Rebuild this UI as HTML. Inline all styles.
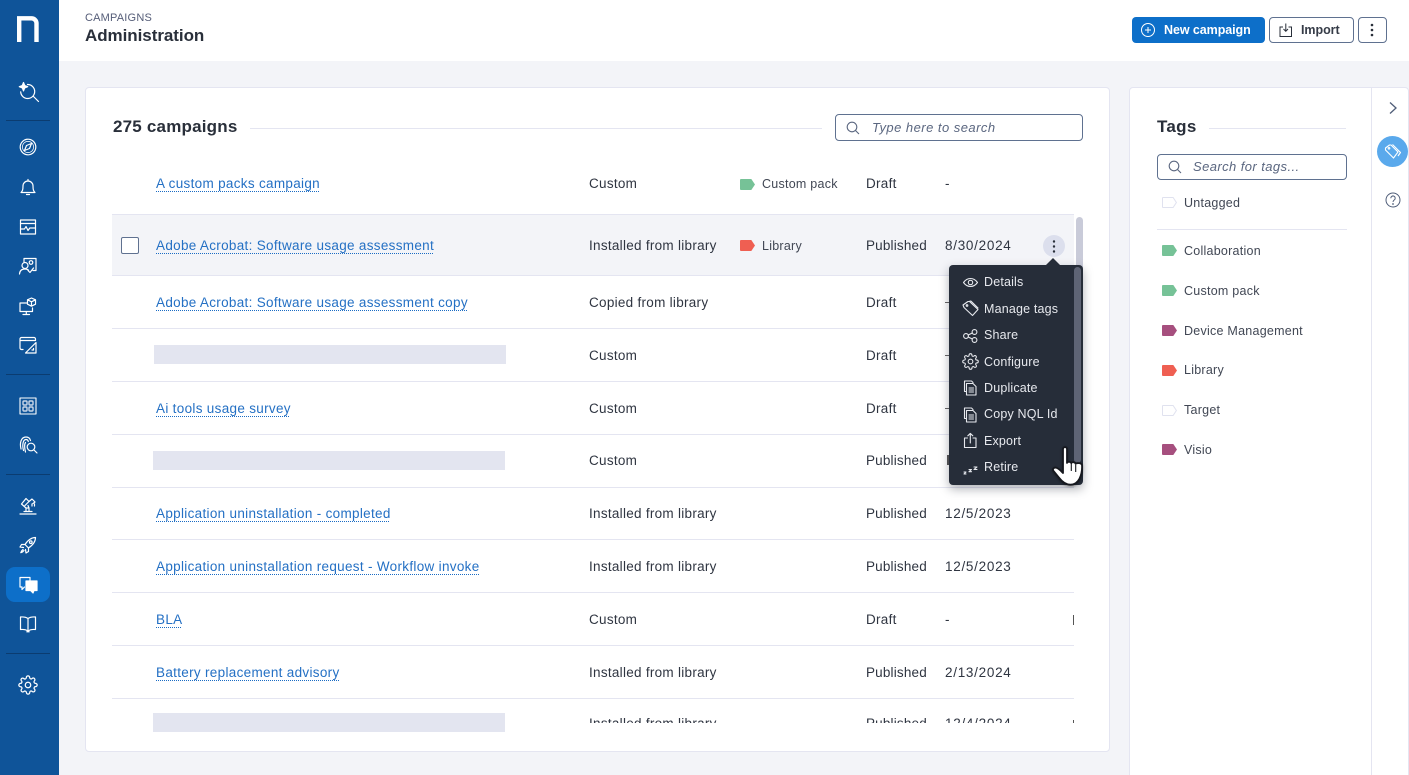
<!DOCTYPE html>
<html lang="en"><head><meta charset="utf-8"><title>Campaigns Administration</title>
<style>
*{box-sizing:border-box}
html,body{margin:0;padding:0;width:1409px;height:775px;overflow:hidden;background:#f3f4f8;font-family:"Liberation Sans",sans-serif;color:#292f3a}
#root{position:relative;width:1409px;height:775px;overflow:hidden}
.a{position:absolute}
.t{position:absolute;white-space:nowrap;font-size:13.5px;line-height:20px;height:20px;margin-top:1px;letter-spacing:.28px;color:#2f3541}
.p{letter-spacing:.18px}
.d{letter-spacing:.72px}
a.t{color:#2470c4;letter-spacing:.31px;text-decoration:underline dotted #1a6cc4 1px;text-underline-offset:3px}
.g{font-size:12.5px;letter-spacing:.25px;color:#414754}
.ln{position:absolute;left:112px;width:962px;height:1px;background:#e4e5f1}
.mask{position:absolute;height:19px;background:#e3e5f0}
.ic{position:absolute;left:18px;width:20px;height:20px;fill:none;stroke:#fff;stroke-width:1.2;stroke-linecap:round;stroke-linejoin:round}
.sl{position:absolute;left:6px;width:44px;height:1px;background:#0b3c70}
.m{position:absolute;left:984px;color:#e7e9ee;font-size:12.5px;line-height:18px;white-space:nowrap;letter-spacing:.17px}
.mi{position:absolute;left:962px;width:17px;height:17px;fill:none;stroke:#e7e9ee;stroke-width:1.1;stroke-linecap:round;stroke-linejoin:round}
.tag{position:absolute;width:15px;height:11px}
</style></head><body>
<div id="root">

<div class="a" style="left:0;top:0;width:59px;height:775px;background:#0f5499"></div>
<div class="a" style="left:59px;top:0;width:1350px;height:61px;background:#fff"></div>

<svg class="a" style="left:17px;top:16px" width="22" height="26" viewBox="0 0 22 26"><path d="M2.200 26V2.300H14.500a5 5 0 0 1 5 5V26" fill="none" stroke="#fff" stroke-width="4.400"/></svg>

<svg class="ic" style="top:81px;left:18px;width:22px;height:22px" viewBox="0 0 22 22"><path d="M9.500 3.500a7 7 0 1 1-6.800 7.300M15 15l5.500 5.500"/><path d="M5.500 1.500l1.200 3 3 1.200-3 1.200-1.200 3-1.200-3-3-1.200 3-1.200z" fill="#fff"/></svg>
<div class="sl" style="top:120px"></div>
<svg class="ic" style="top:137px" viewBox="0 0 20 20"><circle cx="10" cy="10" r="7.800" stroke-dasharray="3 .6"/><circle cx="10" cy="10" r="5.600" stroke-width=".7"/><path d="M13.500 6.500l-2 5-5 2 2-5z"/></svg>
<svg class="ic" style="top:177px" viewBox="0 0 20 20"><path d="M3 15.500h14c-1.500-1.500-2-2.500-2-6.500a5 5 0 0 0-10 0c0 4-.5 5-2 6.500zM8.500 17.500h3M10 2.500v1.500"/></svg>
<svg class="ic" style="top:217px" viewBox="0 0 20 20"><rect x="2.500" y="3" width="15" height="14"/><path d="M2.500 6.500h15M2.500 12h4l1.500-2.500 2 4 1.800-2.500h5.700"/></svg>
<svg class="ic" style="top:256px" viewBox="0 0 20 20"><path d="M6 6V2.500h12v12h-3M10 14.500l2 2 3.500-4.500"/><circle cx="7" cy="9.500" r="3"/><path d="M1.500 18c.3-3.500 2.300-5 5.500-5 1.500 0 2.800.4 3.600 1.300"/><circle cx="13" cy="6.500" r="1.800"/></svg>
<svg class="ic" style="top:296px" viewBox="0 0 20 20"><path d="M9.500 7H2v8.500h12.500V12M8.300 15.500v2.500M5 18.500h6.500"/><path d="M13.500 2l4 1.800v4.400l-4 2-4-2V3.800zM9.500 3.800l4 2 4-2M13.500 5.800v4.400"/></svg>
<svg class="ic" style="top:335px" viewBox="0 0 20 20"><path d="M5 14.500H3.500a1.500 1.500 0 0 1-1.500-1.500V4a1.500 1.500 0 0 1 1.500-1.500h12.500A1.500 1.500 0 0 1 17.500 4v1.500H2"/><path d="M18 7.500v10.500H7.500zM14 15h1.500v-1.500"/></svg>
<div class="sl" style="top:374px"></div>
<svg class="ic" style="top:396px" viewBox="0 0 20 20"><rect x="2" y="2" width="16" height="16" stroke-width="1.100"/><rect x="5" y="5" width="4" height="4" rx="1" stroke-width="1.400" stroke="#c9d6e8"/><rect x="11" y="5" width="4" height="4" rx="1" stroke-width="1.400" stroke="#c9d6e8"/><rect x="5" y="11" width="4" height="4" rx="1" stroke-width="1.400" stroke="#c9d6e8"/><rect x="11" y="11" width="4" height="4" rx="1" stroke-width="1.400" stroke="#c9d6e8"/></svg>
<svg class="ic" style="top:435px" viewBox="0 0 20 20"><path d="M3 14C1.500 8 3 2 8 2c2.500 0 4 1.500 4.500 3.500M5.500 15.500C4 10 5 4.500 8 4.500c1.300 0 2 .7 2.300 2M7.500 17C6.500 13 6.500 9 7.500 7.500"/><circle cx="13" cy="12" r="3.800"/><path d="M16 15l3 3"/></svg>
<div class="sl" style="top:474px"></div>
<svg class="ic" style="top:496px" viewBox="0 0 20 20"><path d="M2 18h16M6 15.500h8M8 15.500v-3.500L3.500 8 8 2.500l3 3L7 9.500M11 12v3.500M8 12h3l-1-2.500M11 5.500L14 3l3 3-2 1.500M16.500 8v2M14 8v2"/></svg>
<svg class="ic" style="top:535px" viewBox="0 0 20 20"><path d="M17.500 2.500c-4.500 0-7.500 2.500-10.500 7l3.500 3.500c4.500-3 7-6 7-10.500zM7 9.500H3.500L2 12l3.500.5M10.500 13v3.500L8 18l-.5-3.500M5 14.500c-1 .7-1.800 2-2.200 3.200 1.200-.4 2.500-1.200 3.200-2.200"/><circle cx="12.800" cy="7.200" r="1.300"/></svg>
<div class="a" style="left:6px;top:567px;width:44px;height:35px;border-radius:9px;background:#0d6fc9"></div>
<svg class="ic" style="top:575px" viewBox="0 0 20 20"><path d="M12 5.500V2.500H2v9.500h2v2.500l2.500-2.500"/><path d="M8 6h11v9.500h-3l-1 2.500-2.500-2.500H8z" fill="#fff" stroke="#fff"/></svg>
<svg class="ic" style="top:614px" viewBox="0 0 20 20"><path d="M10 4.500C8 3 5 2.800 2.500 3v12.500c2.500-.2 5.500 0 7.500 1.500 2-1.500 5-1.700 7.500-1.500V3C15 2.800 12 3 10 4.500zM10 4.500V17M8.800 17.800h2.400"/></svg>
<div class="sl" style="top:653px"></div>
<svg class="ic" style="top:675px;stroke-width:1.500" viewBox="0 0 24 24"><circle cx="12" cy="12" r="3.300"/><path d="M19.400 15a1.650 1.650 0 0 0 .33 1.820l.06.06a2 2 0 0 1 0 2.830 2 2 0 0 1-2.830 0l-.06-.06a1.650 1.650 0 0 0-1.820-.33 1.650 1.650 0 0 0-1 1.510V21a2 2 0 0 1-2 2 2 2 0 0 1-2-2v-.09A1.650 1.650 0 0 0 9 19.400a1.650 1.650 0 0 0-1.820.33l-.06.06a2 2 0 0 1-2.830 0 2 2 0 0 1 0-2.830l.06-.06a1.650 1.650 0 0 0 .33-1.820 1.650 1.650 0 0 0-1.510-1H3a2 2 0 0 1-2-2 2 2 0 0 1 2-2h.09A1.650 1.650 0 0 0 4.600 9a1.650 1.650 0 0 0-.33-1.820l-.06-.06a2 2 0 0 1 0-2.830 2 2 0 0 1 2.830 0l.06.06a1.650 1.650 0 0 0 1.820.33H9a1.650 1.650 0 0 0 1-1.510V3a2 2 0 0 1 2-2 2 2 0 0 1 2 2v.09a1.650 1.650 0 0 0 1 1.510 1.650 1.650 0 0 0 1.820-.33l.06-.06a2 2 0 0 1 2.830 0 2 2 0 0 1 0 2.830l-.06.06a1.650 1.650 0 0 0-.33 1.820V9a1.650 1.650 0 0 0 1.510 1H21a2 2 0 0 1 2 2 2 2 0 0 1-2 2h-.09a1.650 1.650 0 0 0-1.510 1z"/></svg>

<!-- header -->
<div class="t" style="left:85px;top:7px;font-size:11px;color:#555d78;letter-spacing:.2px">CAMPAIGNS</div>
<div class="t" style="left:85px;top:25px;font-size:17px;font-weight:700;color:#292f3a;letter-spacing:-.05px">Administration</div>

<div class="a" style="left:1132px;top:17px;width:133px;height:26px;border-radius:4px;background:#0d6fc9"></div>
<svg class="a" style="left:1140px;top:22px" width="16" height="16" viewBox="0 0 16 16" fill="none" stroke="#fff" stroke-width="1"><circle cx="8" cy="8" r="6.500"/><path d="M8 5v6M5 8h6"/></svg>
<div class="t" style="left:1164px;top:19px;color:#fff;font-weight:700;font-size:12.5px;letter-spacing:-.07px">New campaign</div>
<div class="a" style="left:1269px;top:17px;width:85px;height:26px;border-radius:4px;background:#fff;border:1px solid #5f7190"></div>
<svg class="a" style="left:1278px;top:22px" width="16" height="16" viewBox="0 0 16 16" fill="none" stroke="#292f3a" stroke-width="1"><path d="M5 5H2v9.500h11.500V5h-3M7.800 1.500V9M5.500 7l2.300 2.300L10 7"/></svg>
<div class="t" style="left:1301px;top:19px;font-weight:700;font-size:12.500px;letter-spacing:-.05px;color:#363c48">Import</div>
<div class="a" style="left:1358px;top:17px;width:29px;height:26px;border-radius:4px;background:#fff;border:1px solid #5f7190"></div>
<svg class="a" style="left:1370px;top:22px" width="4" height="16"><circle cx="2" cy="3" r="1.300" fill="#292f3a"/><circle cx="2" cy="8" r="1.300" fill="#292f3a"/><circle cx="2" cy="13" r="1.300" fill="#292f3a"/></svg>

<!-- main card -->
<div class="a" style="left:85px;top:87px;width:1025px;height:665px;background:#fff;border:1px solid #e4e5f1;border-radius:4px"></div>
<div class="t" style="left:113px;top:116px;font-size:17px;font-weight:700;color:#292f3a;letter-spacing:.2px">275 campaigns</div>
<div class="a" style="left:250px;top:128px;width:572px;height:1px;background:#e4e5f1"></div>
<div class="a" style="left:835px;top:114px;width:248px;height:27px;border:1px solid #5f7190;border-radius:4px;background:#fff"></div>
<svg class="a" style="left:846px;top:121px" width="14" height="14" viewBox="0 0 14 14" fill="none" stroke="#5b6780" stroke-width="1.100"><circle cx="6" cy="6" r="4.800"/><path d="M9.500 9.500l3.500 3.500"/></svg>
<div class="t" style="left:872px;top:117px;font-style:italic;color:#5b6780;font-size:13px;letter-spacing:.47px">Type here to search</div>

<!-- rows -->
<div class="a" style="left:112px;top:214px;width:962px;height:62px;background:#f3f4f8"></div>
<div class="ln" style="top:214px"></div><div class="ln" style="top:275px"></div><div class="ln" style="top:328px"></div><div class="ln" style="top:381px"></div><div class="ln" style="top:434px"></div><div class="ln" style="top:487px"></div><div class="ln" style="top:539px"></div><div class="ln" style="top:592px"></div><div class="ln" style="top:645px"></div><div class="ln" style="top:698px"></div>

<div class="a" style="left:121px;top:237px;width:18px;height:17px;border:1px solid #5f7190;border-radius:2px;background:#fff"></div>

<a class="t" style="left:156px;top:173px">A custom packs campaign</a>
<a class="t" style="left:156px;top:235px">Adobe Acrobat: Software usage assessment</a>
<a class="t" style="left:156px;top:292px">Adobe Acrobat: Software usage assessment copy</a>
<div class="mask" style="left:154px;top:345px;width:352px"></div>
<a class="t" style="left:156px;top:398px">Ai tools usage survey</a>
<div class="mask" style="left:153px;top:451px;width:352px"></div>
<a class="t" style="left:156px;top:503px">Application uninstallation - completed</a>
<a class="t" style="left:156px;top:556px">Application uninstallation request - Workflow invoke</a>
<a class="t" style="left:156px;top:609px">BLA</a>
<a class="t" style="left:156px;top:662px">Battery replacement advisory</a>
<div class="mask" style="left:153px;top:713px;width:352px"></div>

<div class="t" style="left:589px;top:173px">Custom</div>
<div class="t" style="left:589px;top:235px">Installed from library</div>
<div class="t" style="left:589px;top:292px">Copied from library</div>
<div class="t" style="left:589px;top:345px">Custom</div>
<div class="t" style="left:589px;top:398px">Custom</div>
<div class="t" style="left:589px;top:450px">Custom</div>
<div class="t" style="left:589px;top:503px">Installed from library</div>
<div class="t" style="left:589px;top:556px">Installed from library</div>
<div class="t" style="left:589px;top:609px">Custom</div>
<div class="t" style="left:589px;top:662px">Installed from library</div>

<svg class="tag" style="left:740px;top:179px" viewBox="0 0 15 11"><path d="M1 0h10.300L15 5.500 11.300 11H1a1 1 0 0 1-1-1V1a1 1 0 0 1 1-1z" fill="#76c297"/></svg>
<div class="t g" style="left:762px;top:173px">Custom pack</div>
<svg class="tag" style="left:740px;top:240px" viewBox="0 0 15 11"><path d="M1 0h10.300L15 5.500 11.300 11H1a1 1 0 0 1-1-1V1a1 1 0 0 1 1-1z" fill="#ef5f52"/></svg>
<div class="t g" style="left:762px;top:235px">Library</div>

<div class="t" style="left:866px;top:173px">Draft</div>
<div class="t p" style="left:866px;top:235px">Published</div>
<div class="t" style="left:866px;top:292px">Draft</div>
<div class="t" style="left:866px;top:345px">Draft</div>
<div class="t" style="left:866px;top:398px">Draft</div>
<div class="t p" style="left:866px;top:450px">Published</div>
<div class="t p" style="left:866px;top:503px">Published</div>
<div class="t p" style="left:866px;top:556px">Published</div>
<div class="t" style="left:866px;top:609px">Draft</div>
<div class="t p" style="left:866px;top:662px">Published</div>

<div class="t" style="left:945px;top:173px">-</div>
<div class="t d" style="left:945px;top:235px">8/30/2024</div>
<div class="t d" style="left:945px;top:503px">12/5/2023</div>
<div class="t d" style="left:945px;top:556px">12/5/2023</div>
<div class="t" style="left:945px;top:609px">-</div>
<div class="t d" style="left:945px;top:662px">2/13/2024</div>
<div class="a" style="left:945px;top:302px;width:5px;height:1px;background:#666"></div>
<div class="a" style="left:945px;top:355px;width:5px;height:1px;background:#666"></div>
<div class="a" style="left:945px;top:408px;width:5px;height:1px;background:#666"></div>
<div class="a" style="left:947px;top:455px;width:2px;height:10px;background:#555"></div>
<div class="a" style="left:1073px;top:615px;width:1px;height:10px;background:#555"></div>

<!-- clipped last row -->
<div class="a" style="left:112px;top:712px;width:962px;height:11px;overflow:hidden">
  <div class="t" style="left:477px;top:1px">Installed from library</div>
  <div class="t p" style="left:754px;top:1px">Published</div>
  <div class="t d" style="left:833px;top:1px">12/4/2024</div>
  <div class="a" style="left:961px;top:8px;width:1px;height:3px;background:#555"></div>
</div>

<!-- scrollbar -->
<div class="a" style="left:1076px;top:217px;width:7px;height:240px;border-radius:4px;background:#c9cbd9"></div>

<!-- kebab -->
<div class="a" style="left:1043px;top:235px;width:22px;height:22px;border-radius:50%;background:#dcdfed"></div>
<svg class="a" style="left:1052px;top:239px" width="4" height="15"><circle cx="2" cy="2.500" r="1.200" fill="#292f3a"/><circle cx="2" cy="7.500" r="1.200" fill="#292f3a"/><circle cx="2" cy="12.500" r="1.200" fill="#292f3a"/></svg>

<!-- menu -->
<div class="a" style="left:949px;top:265px;width:134px;height:220px;border-radius:4px;background:#262d39;box-shadow:0 4px 10px rgba(30,35,50,.35)"></div>
<svg class="a" style="left:1045px;top:258px" width="16" height="8"><path d="M0 8L8 0l8 8z" fill="#262d39"/></svg>
<div class="a" style="left:1074px;top:267px;width:7px;height:196px;border-radius:4px;background:#5e6475"></div>

<svg class="mi" style="top:274px" viewBox="0 0 17 17"><path d="M1.500 8.500C3.500 5.700 6 4.500 8.500 4.500s5 1.200 7 4c-2 2.800-4.500 4-7 4s-5-1.200-7-4z"/><circle cx="8.500" cy="8.500" r="2.200"/></svg>
<div class="m" style="top:273px">Details</div>
<svg class="mi" style="top:300px" viewBox="0 0 17 17"><path d="M1 5l5-3.500h1.500l8.500 8-5.500 6-8.500-8z"/><path d="M8 1l1 .2 7 6.800"/><circle cx="5" cy="5.500" r=".8"/></svg>
<div class="m" style="top:300px">Manage tags</div>
<svg class="mi" style="top:327px" viewBox="0 0 17 17"><circle cx="4" cy="9" r="2.400"/><circle cx="12.500" cy="5" r="2.400"/><circle cx="12.500" cy="13" r="2.400"/><path d="M6.200 8l4.100-2M6.200 10l4.100 2"/></svg>
<div class="m" style="top:326px">Share</div>
<svg class="mi" style="top:353px;stroke-width:1.500" viewBox="0 0 24 24"><circle cx="12" cy="12" r="3.300"/><path d="M19.400 15a1.650 1.650 0 0 0 .33 1.820l.06.06a2 2 0 0 1 0 2.830 2 2 0 0 1-2.830 0l-.06-.06a1.650 1.650 0 0 0-1.820-.33 1.650 1.650 0 0 0-1 1.510V21a2 2 0 0 1-2 2 2 2 0 0 1-2-2v-.09A1.650 1.650 0 0 0 9 19.400a1.650 1.650 0 0 0-1.820.33l-.06.06a2 2 0 0 1-2.830 0 2 2 0 0 1 0-2.830l.06-.06a1.650 1.650 0 0 0 .33-1.820 1.650 1.650 0 0 0-1.510-1H3a2 2 0 0 1-2-2 2 2 0 0 1 2-2h.09A1.650 1.650 0 0 0 4.600 9a1.650 1.650 0 0 0-.33-1.820l-.06-.06a2 2 0 0 1 0-2.830 2 2 0 0 1 2.830 0l.06.06a1.650 1.650 0 0 0 1.820.33H9a1.650 1.650 0 0 0 1-1.510V3a2 2 0 0 1 2-2 2 2 0 0 1 2 2v.09a1.650 1.650 0 0 0 1 1.510 1.650 1.650 0 0 0 1.820-.33l.06-.06a2 2 0 0 1 2.830 0 2 2 0 0 1 0 2.830l-.06.06a1.650 1.650 0 0 0-.33 1.820V9a1.650 1.650 0 0 0 1.510 1H21a2 2 0 0 1 2 2 2 2 0 0 1-2 2h-.09a1.650 1.650 0 0 0-1.510 1z"/></svg>
<div class="m" style="top:353px">Configure</div>
<svg class="mi" style="top:379px" viewBox="0 0 17 17"><path d="M4 12.500H2.500V2h7l1.500 1.500"/><path d="M4.500 4.500h6.500l3 3v8.500H4.500zM7 9h4.500M7 11h4.500M7 13h4.500"/></svg>
<div class="m" style="top:379px">Duplicate</div>
<svg class="mi" style="top:406px" viewBox="0 0 17 17"><path d="M4 12.500H2.500V2h7l1.500 1.500"/><path d="M4.500 4.500h6.500l3 3v8.500H4.500zM7 9h4.500M7 11h4.500M7 13h4.500"/></svg>
<div class="m" style="top:405px">Copy NQL Id</div>
<svg class="mi" style="top:432px" viewBox="0 0 17 17"><path d="M5.500 6H2.500v9.500h11.500V6H11M8.300 11V1.500M5.800 3.800l2.500-2.400 2.500 2.400"/></svg>
<div class="m" style="top:432px">Export</div>
<svg class="mi" style="top:459px" viewBox="0 0 17 17" stroke-width="1.200"><path d="M2 13h2l-2 2h2M7 10.500h2.500l-2.500 2.200h2.500M12 8h3l-3 2.500h3"/></svg>
<div class="m" style="top:458px">Retire</div>

<!-- cursor -->
<svg class="a" style="left:1049px;top:446px;filter:drop-shadow(0 1px 1px rgba(0,0,0,.35))" width="36" height="42" viewBox="0 0 36 42"><path d="M14 3c0-2.500 4-2.500 4 0V17c0-1.500 4-1.700 4.300.3.300-1.700 4.200-1.500 4.400.7.500-1.500 6-1.200 6.300 1.200 .3 5-.3 9-2.500 13.500-1.800 3.500-4.500 6-9 6-5 0-8.500-3-11.500-7L4.500 25c-1.500-2 .5-4 3-3.200 2.500.8 3.800 2.400 6.500 5.200z" fill="#fff" stroke="#16181e" stroke-width="1.800" stroke-linejoin="round"/><path d="M22.300 18v7M26.700 19v7" stroke="#16181e" stroke-width="1.100"/></svg>

<!-- tags panel -->
<div class="a" style="left:1129px;top:87px;width:280px;height:700px;background:#fff;border:1px solid #e4e5f1;border-radius:4px"></div>
<div class="a" style="left:1371px;top:88px;width:1px;height:687px;background:#e4e5f1"></div>
<div class="t" style="left:1157px;top:116px;font-size:17px;font-weight:700;color:#292f3a;letter-spacing:.3px">Tags</div>
<div class="a" style="left:1209px;top:128px;width:137px;height:1px;background:#e4e5f1"></div>
<div class="a" style="left:1157px;top:154px;width:190px;height:26px;border:1px solid #5f7190;border-radius:4px;background:#fff"></div>
<svg class="a" style="left:1168px;top:160px" width="14" height="14" viewBox="0 0 14 14" fill="none" stroke="#5b6780" stroke-width="1.100"><circle cx="6" cy="6" r="4.800"/><path d="M9.500 9.500l3.500 3.500"/></svg>
<div class="t" style="left:1193px;top:156px;font-style:italic;color:#5b6780;font-size:13px;letter-spacing:.42px">Search for tags...</div>

<svg class="tag" style="left:1162px;top:197px" viewBox="0 0 15 11"><path d="M1 .5h10.100L14.400 5.500 11.100 10.500H1a.5.500 0 0 1-.5-.5V1A.5.500 0 0 1 1 .5z" fill="#fff" stroke="#e0e2ef"/></svg>
<div class="t g" style="left:1184px;top:192px">Untagged</div>
<div class="a" style="left:1157px;top:229px;width:190px;height:1px;background:#e4e5f1"></div>
<svg class="tag" style="left:1162px;top:245px" viewBox="0 0 15 11"><path d="M1 0h10.300L15 5.500 11.300 11H1a1 1 0 0 1-1-1V1a1 1 0 0 1 1-1z" fill="#76c297"/></svg>
<div class="t g" style="left:1184px;top:240px">Collaboration</div>
<svg class="tag" style="left:1162px;top:285px" viewBox="0 0 15 11"><path d="M1 0h10.300L15 5.500 11.300 11H1a1 1 0 0 1-1-1V1a1 1 0 0 1 1-1z" fill="#76c297"/></svg>
<div class="t g" style="left:1184px;top:280px">Custom pack</div>
<svg class="tag" style="left:1162px;top:325px" viewBox="0 0 15 11"><path d="M1 0h10.300L15 5.500 11.300 11H1a1 1 0 0 1-1-1V1a1 1 0 0 1 1-1z" fill="#a64f7e"/></svg>
<div class="t g" style="left:1184px;top:320px">Device Management</div>
<svg class="tag" style="left:1162px;top:365px" viewBox="0 0 15 11"><path d="M1 0h10.300L15 5.500 11.300 11H1a1 1 0 0 1-1-1V1a1 1 0 0 1 1-1z" fill="#ef5f52"/></svg>
<div class="t g" style="left:1184px;top:359px">Library</div>
<svg class="tag" style="left:1162px;top:405px" viewBox="0 0 15 11"><path d="M1 .5h10.100L14.400 5.500 11.100 10.500H1a.5.500 0 0 1-.5-.5V1A.5.500 0 0 1 1 .5z" fill="#fff" stroke="#e0e2ef"/></svg>
<div class="t g" style="left:1184px;top:399px">Target</div>
<svg class="tag" style="left:1162px;top:444px" viewBox="0 0 15 11"><path d="M1 0h10.300L15 5.500 11.300 11H1a1 1 0 0 1-1-1V1a1 1 0 0 1 1-1z" fill="#a64f7e"/></svg>
<div class="t g" style="left:1184px;top:439px">Visio</div>

<!-- right rail -->
<svg class="a" style="left:1387px;top:101px" width="12" height="14" viewBox="0 0 12 14" fill="none" stroke="#4f5d78" stroke-width="1.300"><path d="M3 1.500L9 7l-6 5.500"/></svg>
<div class="a" style="left:1377px;top:136px;width:31px;height:31px;border-radius:50%;background:#5aa9ec"></div>
<svg class="a" style="left:1384px;top:143px" width="18" height="18" viewBox="0 0 18 18" fill="none" stroke="#fff" stroke-width="1.100" stroke-linejoin="round"><path d="M1.500 5L5.500 2h1.500l7 7-4.500 6-8-8z"/><path d="M8.500 1.500l8 8-2.500 3.500"/><circle cx="5" cy="5.300" r=".8"/></svg>
<svg class="a" style="left:1385px;top:192px" width="16" height="16" viewBox="0 0 16 16" fill="none" stroke="#4f5d78" stroke-width="1"><circle cx="8" cy="8" r="7"/><path d="M5.800 6.200a2.200 2.200 0 1 1 3.400 1.800c-.8.500-1.200 1-1.200 2"/><circle cx="8" cy="12" r=".4"/></svg>

</div>
</body></html>
